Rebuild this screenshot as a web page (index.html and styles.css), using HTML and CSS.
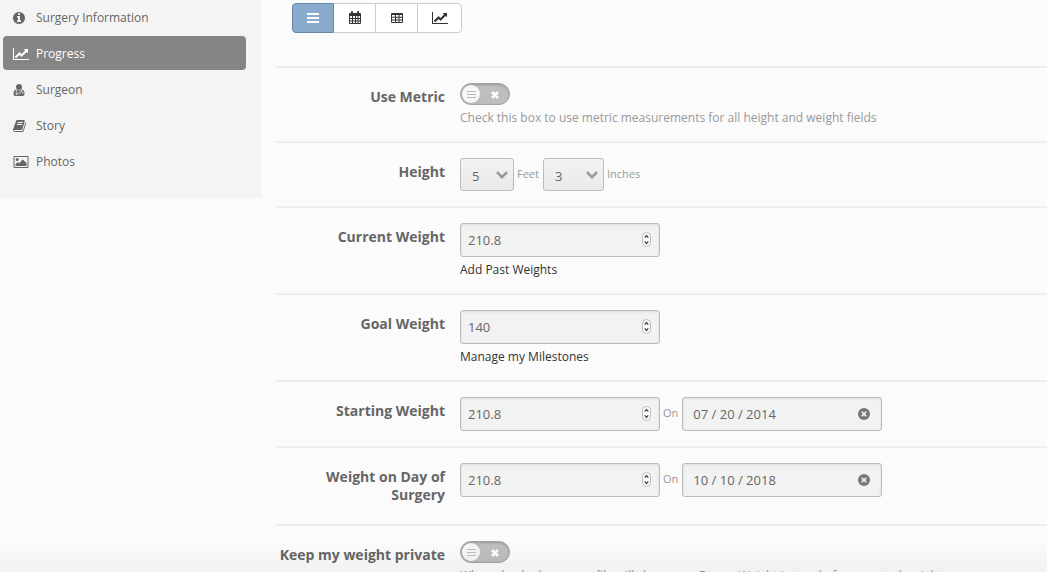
FILE: index.html
```html
<!DOCTYPE html>
<html lang="en">
<head>
<meta charset="utf-8">
<title>Progress</title>
<link rel="stylesheet" href="styles.css">
</head>
<body>
<svg class="defs" aria-hidden="true">
  <symbol id="chart" viewBox="0 0 2048 1792"><path d="M2048 1536v128h-2048v-1536h128v1408h1920zm-128-1248v435q0 21-19.500 29.500t-35.500-7.500l-121-121-633 633q-10 10-23 10t-23-10l-233-233-416 416-192-192 585-585q10-10 23-10t23 10l233 233 464-464-121-121q-16-16-7.500-35.500t29.500-19.500h435q14 0 23 9t9 23z"/></symbol>
  <symbol id="info" viewBox="0 0 1536 1792"><path transform="translate(-128)" d="M1152 1376v-160q0-14-9-23t-23-9h-96v-512q0-14-9-23t-23-9h-320q-14 0-23 9t-9 23v160q0 14 9 23t23 9h96v320h-96q-14 0-23 9t-9 23v160q0 14 9 23t23 9h448q14 0 23-9t9-23zm-128-896v-160q0-14-9-23t-23-9h-192q-14 0-23 9t-9 23v160q0 14 9 23t23 9h192q14 0 23-9t9-23zm640 416q0 209-103 385.500t-279.500 279.500-385.500 103-385.500-103-279.500-279.500-103-385.500 103-385.500 279.500-279.500 385.500-103 385.500 103 279.500 279.500 103 385.500z"/></symbol>
  <symbol id="doctor" viewBox="0 0 11 14"><circle cx="5.500" cy="4" r="3"/><path d="M2.600 6.500Q0 7 0 11.200 0 13 1.800 13H9.200Q11 13 11 11.200 11 7 8.400 6.500 5.500 8.600 2.600 6.500Z"/><path d="M2.800 7v3M8 7v1.600M6.400 11V10q0-1.500 1.600-1.500T9.600 10v1M3.500 12.200l2-3" fill="none" stroke="#f4f4f4" stroke-width=".7"/><circle cx="2.800" cy="10.800" r=".8" fill="#f4f4f4"/></symbol>
  <symbol id="book" viewBox="0 0 1664 1792"><path d="M1639 478q40 57 18 129l-275 906q-19 64-76.500 107.500t-122.500 43.500h-923q-77 0-148.500-53.500t-99.500-131.500q-24-67-2-127 0-4 3-27t4-37q1-8-3-21.500t-3-19.500q2-11 8-21t16.500-23.500 16.500-23.500q23-38 45-91.500t30-91.500q3-10 .5-30t-.5-28q3-11 17-28t17-23q21-36 42-92t25-90q1-9-2.500-32t.5-28q4-13 22-30.500t22-22.500q19-26 42.500-84.500t27.500-96.500q1-8-3-25.500t-2-26.500q2-8 9-18t18-23 17-21q8-12 16.500-30.500t15-35 16-36 19.500-32 26.500-23.500 36-11.500 47.500 5.500l-1 3q38-9 51-9h761q74 0 114 56t18 130l-274 906q-36 119-71.500 153.500t-128.500 34.500h-869q-27 0-38 15-11 16-1 43 24 70 144 70h923q29 0 56-15.500t35-41.500l300-987q7-22 5-57 38 15 59 43zm-1064 2q-4 13 2 22.500t20 9.500h608q13 0 25.500-9.500t16.500-22.500l21-64q4-13-2-22.500t-20-9.500h-608q-13 0-25.500 9.500t-16.500 22.500zm-83 256q-4 13 2 22.500t20 9.500h608q13 0 25.500-9.500t16.500-22.500l21-64q4-13-2-22.500t-20-9.500h-608q-13 0-25.500 9.500t-16.500 22.500z"/></symbol>
  <symbol id="photo" viewBox="0 0 15 14"><path d="M.5 1.500h14v11H.5Z" fill="none" stroke="currentColor"/><circle cx="3.700" cy="4.500" r="1.500"/><path d="M2 11V9.300l2.300-2.200 1.200 1.200L9.300 4.500 13 8V11Z"/></symbol>
  <symbol id="bars" viewBox="0 0 12 12"><path d="M0 1h12v2H0ZM0 5h12v2H0ZM0 9h12v2H0Z"/></symbol>
  <symbol id="bars-thin" viewBox="0 0 9 9"><path d="M0 1h9v1H0ZM0 4h9v1H0ZM0 7h9v1H0Z"/></symbol>
  <symbol id="calendar" viewBox="0 0 12 14"><path d="M1 2H2V1q0-1 1-1t1 1V2H8V1q0-1 1-1t1 1V2h1q1 0 1 1V12q0 1-1 1H1q-1 0-1-1V3Q0 2 1 2Z"/><path d="M1 5h2v2H1ZM4 5h2v2H4ZM7 5h1.500v2H7ZM9.500 5H11v2H9.500ZM1 8h2v1.500H1ZM4 8h2v1.500H4ZM7 8h1.500v1.500H7ZM9.500 8H11v1.500H9.500ZM1 10.500h2V12H1ZM4 10.500h2V12H4ZM7 10.500h1.500V12H7ZM9.500 10.500H11V12H9.500Z" fill="#fff"/></symbol>
  <symbol id="table" viewBox="0 0 12 12"><path d="M1 1H11q1 0 1 1V10q0 1-1 1H1Q0 11 0 10V2Q0 1 1 1Z"/><path d="M1 3h3v1.700H1ZM5 3h2.500v1.700H5ZM8.500 3H11v1.700H8.500ZM1 5.700h3v1.700H1ZM5 5.700h2.500v1.700H5ZM8.500 5.700H11v1.700H8.500ZM1 8.400h3V10H1ZM5 8.400h2.500V10H5ZM8.500 8.400H11V10H8.500Z" fill="#fff"/></symbol>
  <symbol id="cross" viewBox="0 0 8 8"><path d="M1 1 7 7M7 1 1 7" fill="none" stroke="currentColor" stroke-width="2.600"/></symbol>
  <symbol id="spinner" viewBox="0 0 9 15"><rect x=".5" y=".5" width="8" height="14" rx="4" fill="#fff" stroke="#bbb"/><path d="M2.700 5.700 4.500 3.500 6.300 5.700M2.700 9.300 4.500 11.500 6.300 9.300" fill="none" stroke="#444" stroke-width="1.300"/></symbol>
  <symbol id="clear" viewBox="0 0 12 12"><circle cx="6" cy="6" r="6"/><path d="m3.700 3.700 4.600 4.600m0-4.600L3.700 8.300" stroke="#f2f2f2" stroke-width="1.600"/></symbol>
  <symbol id="chevron" viewBox="0 0 12 8"><path d="m1 1.200 5 5 5-5" fill="none" stroke="currentColor" stroke-width="2.600"/></symbol>
</svg>
<div class="page">
  <nav class="sidebar">
    <a class="nav-link" href="#info"><svg class="icon"><use href="#info"/></svg>Surgery Information</a>
    <a class="nav-link active" href="#progress"><svg class="icon wide"><use href="#chart"/></svg>Progress</a>
    <a class="nav-link" href="#surgeon"><svg class="icon"><use href="#doctor"/></svg>Surgeon</a>
    <a class="nav-link" href="#story"><svg class="icon book"><use href="#book"/></svg>Story</a>
    <a class="nav-link" href="#photos"><svg class="icon wide"><use href="#photo"/></svg>Photos</a>
  </nav>
  <main class="content">
    <div class="views">
      <button class="view selected" type="button" aria-label="List"><svg class="icon list"><use href="#bars"/></svg></button>
      <button class="view" type="button" aria-label="Calendar"><svg class="icon"><use href="#calendar"/></svg></button>
      <button class="view" type="button" aria-label="Table"><svg class="icon"><use href="#table"/></svg></button>
      <button class="view" type="button" aria-label="Chart"><svg class="icon wide"><use href="#chart"/></svg></button>
    </div>
    <form class="form">
      <div class="row">
        <label class="label" for="metric">Use Metric</label>
        <div class="field">
          <div class="toggle"><input class="switch" type="checkbox" id="metric"><span class="knob"><svg><use href="#bars-thin"/></svg></span><svg class="off"><use href="#cross"/></svg></div>
          <p class="help">Check this box to use metric measurements for all height and weight fields</p>
        </div>
      </div>
      <div class="row">
        <label class="label" for="feet">Height</label>
        <div class="field line">
          <div class="picker"><select class="control select" id="feet"><option>5</option></select><svg class="chevron"><use href="#chevron"/></svg></div>
          <label class="unit" for="feet">Feet</label>
          <div class="picker inches"><select class="control select" id="inches"><option>3</option></select><svg class="chevron"><use href="#chevron"/></svg></div>
          <label class="unit" for="inches">Inches</label>
        </div>
      </div>
      <div class="row">
        <label class="label" for="current">Current Weight</label>
        <div class="field">
          <div class="box"><input class="control" id="current" type="text" inputmode="decimal" value="210.8"><svg class="spinner"><use href="#spinner"/></svg></div>
          <a class="more" href="#past">Add Past Weights</a>
        </div>
      </div>
      <div class="row">
        <label class="label" for="goal">Goal Weight</label>
        <div class="field">
          <div class="box"><input class="control" id="goal" type="text" inputmode="decimal" value="140"><svg class="spinner"><use href="#spinner"/></svg></div>
          <a class="more" href="#milestones">Manage my Milestones</a>
        </div>
      </div>
      <div class="row dated">
        <label class="label" for="start">Starting Weight</label>
        <div class="field line">
          <div class="box"><input class="control" id="start" type="text" inputmode="decimal" value="210.8"><svg class="spinner"><use href="#spinner"/></svg></div>
          <label class="unit" for="start-date">On</label>
          <div class="box"><input class="control date" id="start-date" type="text" value="07 / 20 / 2014"><button class="clear" type="button" aria-label="Clear date"><svg><use href="#clear"/></svg></button></div>
        </div>
      </div>
      <div class="row tall">
        <label class="label" for="surgery">Weight on Day of Surgery</label>
        <div class="field line">
          <div class="box"><input class="control" id="surgery" type="text" inputmode="decimal" value="210.8"><svg class="spinner"><use href="#spinner"/></svg></div>
          <label class="unit" for="surgery-date">On</label>
          <div class="box"><input class="control date" id="surgery-date" type="text" value="10 / 10 / 2018"><button class="clear" type="button" aria-label="Clear date"><svg><use href="#clear"/></svg></button></div>
        </div>
      </div>
      <div class="row">
        <label class="label" for="private">Keep my weight private</label>
        <div class="field">
          <div class="toggle"><input class="switch" type="checkbox" id="private"><span class="knob"><svg><use href="#bars-thin"/></svg></span><svg class="off"><use href="#cross"/></svg></div>
          <p class="help">When checked, your profile will show your Forum Weight instead of your actual weight</p>
        </div>
      </div>
    </form>
  </main>
</div>
<div class="fade"></div>
</body>
</html>
```
FILE: styles.css
```css
* { box-sizing: border-box; }
body {
  margin: 0;
  height: 100vh;
  overflow: hidden;
  background: #fbfbfb;
  color: #666;
  font: 12px/18px "Open Sans", sans-serif;
}
svg { display: block; fill: currentColor; }
.defs { position: absolute; width: 0; height: 0; }
.page { display: flex; align-items: flex-start; }
.sidebar {
  flex: 0 0 261px;
  display: flex;
  flex-direction: column;
  gap: 2px;
  padding: 0 15px 20px 3px;
  background: #f4f4f4;
}
.nav-link {
  display: flex;
  align-items: center;
  gap: 7px;
  height: 34px;
  padding: 2px 10px 0;
  border-radius: 4px;
  color: #666;
  text-decoration: none;
}
.nav-link.active { background: #858585; color: #fff; }
.nav-link .icon { width: 12px; margin-right: 4px; }
.nav-link .icon.book { width: 13px; margin-right: 3px; }
.nav-link .icon.wide { width: 16px; margin-right: 0; }
.icon { width: 12px; height: 14px; }
.icon.wide { width: 16px; }
.icon.list { height: 12px; }
.content { flex: 1; min-width: 0; padding: 3px 0 0 14px; }
.views { display: flex; margin: 0 0 33px 17px; }
.view {
  display: flex;
  align-items: center;
  justify-content: center;
  width: 43px;
  height: 30px;
  margin-right: -1px;
  padding: 0;
  border: 1px solid #ccc;
  background: #fff;
  color: #333;
}
.view:last-child { width: 45px; border-radius: 0 4px 4px 0; }
.view.selected { width: 42px; border-color: #6688a8; border-radius: 4px 0 0 4px; background: #8aaccc; color: #fff; z-index: 1; }
.row {
  display: grid;
  grid-template-columns: 170px 1fr;
  gap: 15px;
  padding: 15px 0 14px;
  border-top: 2px solid #eee;
}
.row.dated { padding-bottom: 15px; }
.row.tall { padding-bottom: 20px; }
.label { padding-top: 5px; font-size: 14px; font-weight: 700; text-align: right; }
.line { display: flex; align-items: flex-start; gap: 3px; }
.help { margin: 4px 0 0; color: #999; }
.unit { padding: 7px 1px 0 0; color: #999; font-size: 11px; }
.more { display: block; margin-top: 4px; color: #333; text-decoration: none; }
.box, .picker, .toggle { position: relative; }
.box { width: 200px; }
.picker { width: 54px; }
.inches { width: 61px; }
.control {
  display: block;
  width: 100%;
  height: 34px;
  padding: 0 7px;
  border: 1px solid #bbb;
  border-radius: 3px;
  background: #f2f2f2;
  box-shadow: inset 0 1px 3px #ddd;
  color: #666;
  font: 13px/18px "Open Sans", sans-serif;
}
.control.date { padding-left: 10px; }
.select {
  appearance: none;
  height: 33px;
  padding: 2px 11px 0;
  background: linear-gradient(#f3f3f3, #e9e9e9);
  box-shadow: none;
}
.picker { height: 34px; }
.chevron { position: absolute; top: 13px; right: 6px; width: 12px; height: 8px; color: #999; pointer-events: none; }
.spinner { position: absolute; top: 9px; right: 9px; width: 9px; height: 15px; pointer-events: none; }
.clear { position: absolute; top: 11px; right: 12px; padding: 0; border: 0; background: none; color: #777; }
.clear svg { width: 12px; height: 12px; }
.toggle { width: 50px; height: 22px; }
.switch {
  appearance: none;
  display: block;
  width: 50px;
  height: 22px;
  margin: 0;
  border: 1px solid #a4a4a4;
  border-radius: 11px;
  background: #bebebe;
  box-shadow: inset 0 1px 2px #999;
}
.knob {
  position: absolute;
  top: 2px;
  left: 2px;
  display: grid;
  place-items: center;
  width: 18px;
  height: 18px;
  border-radius: 50%;
  background: #f7f7f7;
  color: #bbb;
  pointer-events: none;
}
.knob svg { width: 9px; height: 9px; }
.off { position: absolute; top: 8px; left: 31px; width: 8px; height: 8px; color: #fff; pointer-events: none; }
.fade {
  position: fixed;
  inset: auto 0 0;
  height: 30px;
  background: linear-gradient(transparent, rgba(0, 0, 0, .04));
  pointer-events: none;
}
```
